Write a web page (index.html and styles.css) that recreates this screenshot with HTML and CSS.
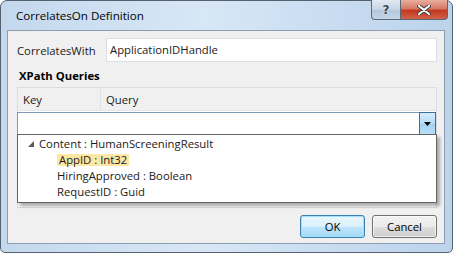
FILE: index.html
```html
<!DOCTYPE html>
<html lang="en">
<head>
    <meta charset="UTF-8">
    <title>CorrelatesOn Definition</title>
    <link rel="stylesheet" href="styles.css">
</head>
<body>
    <div class="window">
        <div class="titlebar">
            <span class="title">CorrelatesOn Definition</span>
            <div class="caption-buttons">
                <div class="cap-btn help">?</div>
                <div class="cap-btn close">
                    <svg width="14" height="10" viewBox="0 0 14 10">
                        <path d="M2 1 L12 9 M12 1 L2 9" stroke="#3a3a3a" stroke-width="4" stroke-linecap="round"/>
                        <path d="M2 1 L12 9 M12 1 L2 9" stroke="#ffffff" stroke-width="2.2" stroke-linecap="round"/>
                    </svg>
                </div>
            </div>
        </div>

        <div class="client">
            <div class="field-row">
                <label class="field-label">CorrelatesWith</label>
                <div class="textbox">ApplicationIDHandle</div>
            </div>

            <div class="section-title">XPath Queries</div>

            <div class="grid">
                <div class="grid-header">
                    <div class="col col-key">Key</div>
                    <div class="col col-query">Query</div>
                </div>
                <div class="grid-row">
                    <div class="combo">
                        <div class="combo-arrow">
                            <svg width="7" height="4" viewBox="0 0 7 4"><path d="M0 0 H7 L3.5 4 Z" fill="#000"/></svg>
                        </div>
                    </div>
                </div>

                <!-- dropdown list of the combo -->
                <div class="popup">
                    <div class="tree-node root">
                        <svg class="expander" width="6" height="6" viewBox="0 0 6 6"><path d="M6 0 V6 H0 Z" fill="#595959"/></svg>
                        <span>Content : HumanScreeningResult</span>
                    </div>
                    <div class="tree-node child"><span class="selected">AppID : Int32</span></div>
                    <div class="tree-node child"><span>HiringApproved : Boolean</span></div>
                    <div class="tree-node child"><span>RequestID : Guid</span></div>
                </div>
            </div>

            <div class="buttons">
                <button class="btn btn-default">OK</button>
                <button class="btn">Cancel</button>
            </div>
        </div>
    </div>
</body>
</html>
```

FILE: styles.css
```css
body {
    margin: 0;
    background-color: #ffffff;
    font-family: "Open Sans", "Noto Sans", sans-serif;
    font-size: 11.3px;
    color: #1a1a1a;
}
.window {
    box-sizing: border-box;
    width: 453px;
    height: 253px;
    border: 1px solid #56616e;
    border-radius: 7px 7px 5px 5px;
    background: linear-gradient(to right, #c3d8ee, #d8e7f6 45%, #cadef2 70%, #bcd3eb);
    padding: 0 7px 8px 6px;
    display: flex;
    flex-direction: column;
}
.titlebar {
    height: 29px;
    display: flex;
    justify-content: space-between;
    align-items: flex-start;
}
.title {
    padding-left: 9px;
    line-height: 29px;
    font-size: 11.6px;
    color: #000;
}
.caption-buttons {
    display: flex;
    margin-top: -1px;
    margin-right: -3px;
}
.cap-btn {
    box-sizing: border-box;
    height: 20px;
    border: 1px solid #5b6878;
    border-top: none;
    display: flex;
    align-items: center;
    justify-content: center;
}
.cap-btn.help {
    width: 29px;
    border-radius: 0 0 0 4px;
    border-right: none;
    background: linear-gradient(#e1e9f2, #c7d5e4 50%, #b3c5d9 51%, #c4d5e8);
    font-family: "DejaVu Sans", sans-serif;
    font-weight: bold;
    font-size: 12px;
    color: #3d4650;
    text-shadow: 0 0 2px #fff;
}
.cap-btn.close {
    width: 48px;
    border-radius: 0 0 4px 0;
    background: linear-gradient(#e9ad9f, #d67a65 45%, #c2391f 55%, #d0624a);
}
.client {
    box-sizing: border-box;
    height: 214px;
    border: 1px solid #8e9caf;
    background-color: #f0f0f0;
    padding: 7px 7px 0 9px;
    display: flex;
    flex-direction: column;
}
.field-row {
    display: flex;
    align-items: center;
}
.field-label {
    width: 89px;
}
.textbox {
    flex: 1;
    box-sizing: border-box;
    height: 24px;
    line-height: 22px;
    padding-left: 3px;
    border: 1px solid #dbe0e6;
    background-color: #ffffff;
}
.section-title {
    margin: 6px 0 3px 2px;
    line-height: 16px;
    font-weight: bold;
    color: #000;
}
.grid {
    position: relative;
    box-sizing: border-box;
    height: 121px;
    border: 1px solid #d8dde3;
    background-color: #f6f6f6;
}
.grid-header {
    display: flex;
    height: 22px;
    line-height: 23px;
    background-color: #f0f0f0;
    border-bottom: 1px solid #e2e6ea;
}
.col {
    box-sizing: border-box;
    padding-left: 5px;
}
.col-key {
    width: 83px;
    border-right: 1px solid #dde2e7;
}
.col-query {
    flex: 1;
}
.grid-row {
    background-color: #ffffff;
    padding-top: 1px;
}
.combo {
    box-sizing: border-box;
    height: 23px;
    margin-left: -1px;
    border: 1px solid #7d9ab5;
    background-color: #ffffff;
    display: flex;
    justify-content: flex-end;
}
.combo-arrow {
    box-sizing: border-box;
    width: 17px;
    margin: -1px -1px -1px 0;
    border: 1px solid #3b6f99;
    background: linear-gradient(#d6ecfa, #b7dcf5 50%, #a2d0f0 51%, #b9def5);
    display: flex;
    align-items: center;
    justify-content: center;
}
.popup {
    position: absolute;
    left: -1px;
    top: 46px;
    width: 420px;
    box-sizing: border-box;
    padding: 1px 0 2px;
    border: 1px solid #646464;
    background-color: #ffffff;
    box-shadow: 3px 3px 3px rgba(0, 0, 0, 0.3);
}
.tree-node {
    height: 16px;
    line-height: 16px;
    display: flex;
    align-items: center;
}
.tree-node.root {
    padding-left: 10px;
}
.expander {
    margin-right: 5px;
}
.tree-node.child {
    padding-left: 39px;
}
.tree-node .selected {
    background-color: #fce7a4;
    padding: 0 2px;
    line-height: 12px;
}
.buttons {
    display: flex;
    justify-content: flex-end;
    gap: 7px;
    margin-top: 7px;
}
.btn {
    box-sizing: border-box;
    width: 65px;
    height: 23px;
    padding: 0;
    font-family: inherit;
    font-size: inherit;
    color: #000;
    border: 1px solid #707070;
    border-radius: 3px;
    background: linear-gradient(#f2f2f2, #ebebeb 50%, #dddddd 51%, #cfcfcf);
    box-shadow: inset 0 0 0 1px rgba(255, 255, 255, 0.7);
}
.btn-default {
    border-color: #3c7fb1;
    background: linear-gradient(#eaf6fd, #d9f0fc 50%, #bee6fd 51%, #a7d9f5);
    box-shadow: inset 0 0 0 1px #9fe1f9;
}
```
